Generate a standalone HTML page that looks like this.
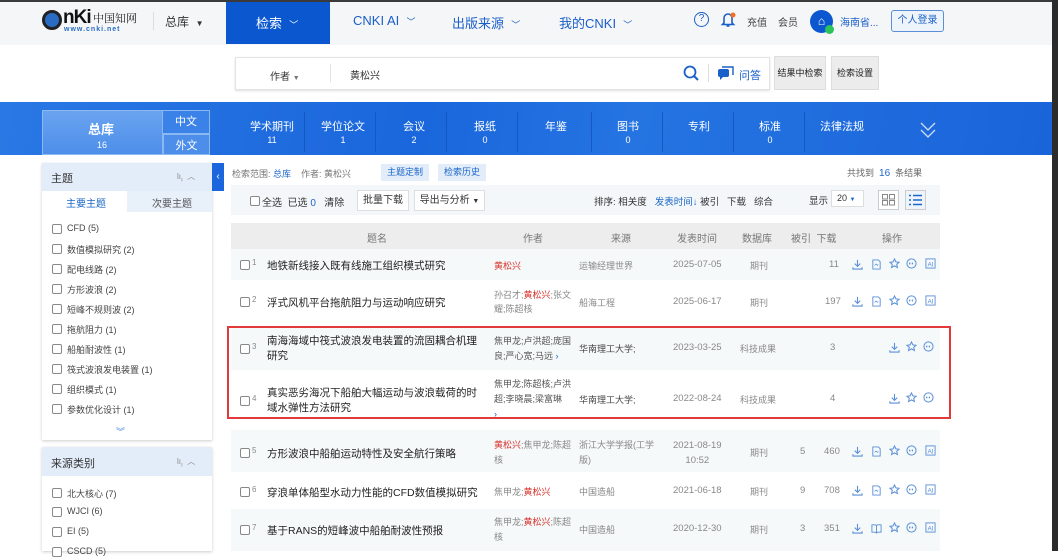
<!DOCTYPE html>
<html><head><meta charset="utf-8">
<style>
*{margin:0;padding:0;box-sizing:border-box}
body{width:1058px;height:551px;overflow:hidden;background:#fff;font-family:"Liberation Sans","Noto Sans CJK SC",sans-serif;font-size:10px;color:#333;position:relative}
.a{position:absolute;white-space:nowrap}
.blue{color:#1b66c9}
.gray{color:#888}
.red{color:#d9332c}
.cb{position:absolute;width:10px;height:10px;border:1px solid #888;border-radius:2px;background:#fff}
.ico{position:absolute;width:11px;height:11px}
</style></head><body>
<!-- top dark line and right strip -->
<div class="a" style="left:0;top:0;width:1058px;height:2px;background:#3a3a3a"></div>
<div class="a" style="left:1052px;top:0;width:6px;height:551px;background:#2b2b2b"></div>
<!-- top bar -->
<div class="a" style="left:0;top:2px;width:1052px;height:43px;background:#f5f6f7"></div>
<div class="a" style="left:42px;top:10px;width:20px;height:20px;border-radius:50%;background:#2a6cc4;border:3px solid #222"></div>
<div class="a" style="left:63px;top:7px;font-size:19px;font-weight:bold;color:#111;letter-spacing:-1px">nKi</div>
<div class="a" style="left:93px;top:10px;font-size:11px;color:#222;font-family:'Noto Serif CJK SC',serif">中国知网</div>
<div class="a" style="left:64px;top:26px;font-size:7px;color:#2a6cc4;font-weight:bold;letter-spacing:1px">www.cnki.net</div>
<div class="a" style="left:153px;top:12px;width:1px;height:18px;background:#ddd"></div>
<div class="a" style="left:165px;top:13px;font-size:12px;color:#333">总库 &nbsp;<span style="font-size:8px">▼</span></div>
<div class="a" style="left:226px;top:2px;width:104px;height:42px;background:#0b57d0"></div>
<div class="a" style="left:256px;top:13px;font-size:13px;color:#fff">检索 &nbsp;<span style="font-size:9px">﹀</span></div>
<div class="a" style="left:353px;top:13px;font-size:13px;color:#1b5fc9">CNKI AI &nbsp;<span style="font-size:9px">﹀</span></div>
<div class="a" style="left:452px;top:13px;font-size:13px;color:#1b5fc9">出版来源 &nbsp;<span style="font-size:9px">﹀</span></div>
<div class="a" style="left:559px;top:13px;font-size:13px;color:#1b5fc9">我的CNKI &nbsp;<span style="font-size:9px">﹀</span></div>
<div class="a" style="left:694px;top:12px;width:15px;height:15px;border:1.5px solid #1b5fc9;border-radius:50%;color:#1b5fc9;font-size:10px;text-align:center;line-height:12px">?</div>
<svg class="a" style="left:720px;top:11px" width="16" height="17" viewBox="0 0 16 17"><path d="M4 12V7a4 4 0 0 1 8 0v5l1.5 1.5h-11z M6.5 15h3" stroke="#1b5fc9" stroke-width="1.6" fill="none"/><circle cx="13" cy="4" r="2.5" fill="#f36f21"/></svg>
<div class="a" style="left:747px;top:14px;font-size:10px;color:#444">充值</div>
<div class="a" style="left:778px;top:14px;font-size:10px;color:#444">会员</div>
<div class="a" style="left:810px;top:10px;width:23px;height:23px;border-radius:50%;background:#0b57d0;color:#fff;font-size:12px;text-align:center;line-height:22px">⌂</div>
<div class="a" style="left:825px;top:25px;width:9px;height:9px;border-radius:50%;background:#2cc45a"></div>
<div class="a" style="left:840px;top:14px;font-size:10px;color:#1b5fc9">海南省...</div>
<div class="a" style="left:891px;top:10px;width:53px;height:22px;border:1px solid #5a8fd8;border-radius:3px;background:#eef4fc;font-size:10px;color:#1b5fc9;text-align:center;line-height:20px">个人登录</div>
<!-- search row -->
<div class="a" style="left:235px;top:57px;width:535px;height:33px;border:1px solid #e3e3e3;box-shadow:0 1px 2px #ddd;background:#fff"></div>
<div class="a" style="left:270px;top:68px;font-size:10px;color:#333">作者 <span style="font-size:7px;color:#777">▼</span></div>
<div class="a" style="left:330px;top:64px;width:1px;height:18px;background:#e3e3e3"></div>
<div class="a" style="left:350px;top:67px;font-size:10px;color:#333">黄松兴</div>
<svg class="a" style="left:683px;top:65px" width="16" height="16" viewBox="0 0 16 16"><circle cx="7" cy="7" r="5.5" stroke="#1b5fc9" stroke-width="1.8" fill="none"/><path d="M11 11l4 4" stroke="#1b5fc9" stroke-width="2"/></svg>
<div class="a" style="left:708px;top:64px;width:1px;height:18px;background:#ddd"></div>
<svg class="a" style="left:717px;top:66px" width="17" height="14" viewBox="0 0 17 14"><rect x="1" y="3" width="11" height="8" rx="2" fill="#1b5fc9"/><path d="M5 1h11v8" stroke="#1b5fc9" stroke-width="1.4" fill="none"/><path d="M3 11l0 3 3-3" fill="#1b5fc9"/></svg>
<div class="a" style="left:739px;top:67px;font-size:11px;color:#1b5fc9">问答</div>
<div class="a" style="left:774px;top:56px;width:52px;height:34px;background:#ececec;border:1px solid #ddd;font-size:9px;color:#222;text-align:center;line-height:32px">结果中检索</div>
<div class="a" style="left:831px;top:56px;width:48px;height:34px;background:#ececec;border:1px solid #ddd;font-size:9px;color:#222;text-align:center;line-height:32px">检索设置</div>
<!-- blue band -->
<div class="a" style="left:0;top:102px;width:1052px;height:53px;background:linear-gradient(100deg,#2a78e4 0%,#1a66dc 40%,#2574e2 60%,#1a64da 100%)"></div>
<div class="a" style="left:42px;top:110px;width:121px;height:45px;background:linear-gradient(180deg,#6aa4f0,#4d8eea);border:1px solid #8bb8f2"></div>
<div class="a" style="left:88px;top:119px;font-size:13px;font-weight:bold;color:#fff">总库</div>
<div class="a" style="left:97px;top:140px;font-size:9px;color:#fff">16</div>
<div class="a" style="left:163px;top:110px;width:47px;height:24px;border:1px solid #8bb8f2;border-left:none;background:#3a82e8;font-size:11px;color:#fff;text-align:center;line-height:22px">中文</div>
<div class="a" style="left:163px;top:134px;width:47px;height:21px;border:1px solid #8bb8f2;background:#4d8eea;font-size:11px;color:#fff;text-align:center;line-height:22px">外文</div>
<div class="a" style="left:240px;top:118px;font-size:11px;color:#fff;width:64px;text-align:center">学术期刊<br><span style="font-size:9px">11</span></div>
<div class="a" style="left:311px;top:118px;font-size:11px;color:#fff;width:64px;text-align:center">学位论文<br><span style="font-size:9px">1</span></div>
<div class="a" style="left:382px;top:118px;font-size:11px;color:#fff;width:64px;text-align:center">会议<br><span style="font-size:9px">2</span></div>
<div class="a" style="left:453px;top:118px;font-size:11px;color:#fff;width:64px;text-align:center">报纸<br><span style="font-size:9px">0</span></div>
<div class="a" style="left:524px;top:118px;font-size:11px;color:#fff;width:64px;text-align:center">年鉴</div>
<div class="a" style="left:596px;top:118px;font-size:11px;color:#fff;width:64px;text-align:center">图书<br><span style="font-size:9px">0</span></div>
<div class="a" style="left:667px;top:118px;font-size:11px;color:#fff;width:64px;text-align:center">专利</div>
<div class="a" style="left:738px;top:118px;font-size:11px;color:#fff;width:64px;text-align:center">标准<br><span style="font-size:9px">0</span></div>
<div class="a" style="left:810px;top:118px;font-size:11px;color:#fff;width:64px;text-align:center">法律法规</div>
<div class="a" style="left:304px;top:112px;width:1px;height:40px;background:#1558c4"></div>
<div class="a" style="left:375px;top:112px;width:1px;height:40px;background:#1558c4"></div>
<div class="a" style="left:446px;top:112px;width:1px;height:40px;background:#1558c4"></div>
<div class="a" style="left:517px;top:112px;width:1px;height:40px;background:#1558c4"></div>
<div class="a" style="left:591px;top:112px;width:1px;height:40px;background:#1558c4"></div>
<div class="a" style="left:662px;top:112px;width:1px;height:40px;background:#1558c4"></div>
<div class="a" style="left:733px;top:112px;width:1px;height:40px;background:#1558c4"></div>
<div class="a" style="left:804px;top:112px;width:1px;height:40px;background:#1558c4"></div>
<svg class="a" style="left:919px;top:120px" width="18" height="20" viewBox="0 0 18 20"><path d="M2 3l7 7 7-7M2 10l7 7 7-7" stroke="#cfe0fa" stroke-width="1.3" fill="none"/></svg>
<!-- left panel -->
<div class="a" style="left:42px;top:163px;width:170px;height:277px;background:#fff;box-shadow:0 1px 3px #ccc"></div>
<div class="a" style="left:42px;top:163px;width:170px;height:28px;background:#e3edf9"></div>
<div class="a" style="left:51px;top:170px;font-size:11px;color:#333">主题</div>
<div class="a" style="left:177px;top:171px;font-size:8px;color:#888">lı<sub>ı</sub> &nbsp;︿</div>
<div class="a" style="left:127px;top:191px;width:85px;height:21px;background:#e8f0fa"></div>
<div class="a" style="left:66px;top:195px;font-size:10px;color:#1b66c9">主要主题</div>
<div class="a" style="left:152px;top:195px;font-size:10px;color:#555">次要主题</div>
<div class="a" style="left:212px;top:163px;width:12px;height:28px;background:#1b66dc;color:#fff;font-size:10px;text-align:center;line-height:27px">‹</div>
<div id="l1"></div>
<div class="a" style="left:116px;top:425px;font-size:9px;color:#4a8ae0">︾</div>
<div class="a" style="left:42px;top:447px;width:170px;height:104px;background:#fff;box-shadow:0 1px 3px #ccc"></div>
<div class="a" style="left:42px;top:447px;width:170px;height:29px;background:#e3edf9"></div>
<div class="a" style="left:51px;top:455px;font-size:11px;color:#333">来源类别</div>
<div class="a" style="left:177px;top:456px;font-size:8px;color:#888">lı<sub>ı</sub> &nbsp;︿</div>
<!-- list items -->
<div class="cb" style="left:52px;top:224px"></div><div class="a" style="left:67px;top:223px;color:#444;font-size:9px">CFD (5)</div>
<div class="cb" style="left:52px;top:244px"></div><div class="a" style="left:67px;top:243px;color:#444;font-size:9px">数值模拟研究 (2)</div>
<div class="cb" style="left:52px;top:264px"></div><div class="a" style="left:67px;top:263px;color:#444;font-size:9px">配电线路 (2)</div>
<div class="cb" style="left:52px;top:284px"></div><div class="a" style="left:67px;top:283px;color:#444;font-size:9px">方形波浪 (2)</div>
<div class="cb" style="left:52px;top:304px"></div><div class="a" style="left:67px;top:303px;color:#444;font-size:9px">短峰不规则波 (2)</div>
<div class="cb" style="left:52px;top:324px"></div><div class="a" style="left:67px;top:323px;color:#444;font-size:9px">拖航阻力 (1)</div>
<div class="cb" style="left:52px;top:344px"></div><div class="a" style="left:67px;top:343px;color:#444;font-size:9px">船舶耐波性 (1)</div>
<div class="cb" style="left:52px;top:364px"></div><div class="a" style="left:67px;top:363px;color:#444;font-size:9px">筏式波浪发电装置 (1)</div>
<div class="cb" style="left:52px;top:384px"></div><div class="a" style="left:67px;top:383px;color:#444;font-size:9px">组织模式 (1)</div>
<div class="cb" style="left:52px;top:404px"></div><div class="a" style="left:67px;top:403px;color:#444;font-size:9px">参数优化设计 (1)</div>
<div class="cb" style="left:52px;top:488px"></div><div class="a" style="left:67px;top:487px;color:#444;font-size:9px">北大核心 (7)</div>
<div class="cb" style="left:52px;top:507px"></div><div class="a" style="left:67px;top:506px;color:#444;font-size:9px">WJCI (6)</div>
<div class="cb" style="left:52px;top:527px"></div><div class="a" style="left:67px;top:526px;color:#444;font-size:9px">EI (5)</div>
<div class="cb" style="left:52px;top:547px"></div><div class="a" style="left:67px;top:546px;color:#444;font-size:9px">CSCD (5)</div>
<!-- result head -->
<div class="a" style="left:232px;top:167px;font-size:9px;color:#777">检索范围: <b class="blue" style="font-weight:normal">总库</b> &nbsp;&nbsp; 作者: 黄松兴</div>
<div class="a" style="left:381px;top:164px;width:48px;height:17px;background:#e3edf9;color:#1b66c9;font-size:9px;text-align:center;line-height:17px">主题定制</div>
<div class="a" style="left:438px;top:164px;width:48px;height:17px;background:#e3edf9;color:#1b66c9;font-size:9px;text-align:center;line-height:17px">检索历史</div>
<div class="a" style="left:847px;top:166px;font-size:9px;color:#666">共找到 &nbsp;<span class="blue" style="font-size:10px">16</span>&nbsp; 条结果</div>
<div class="a" style="left:231px;top:185px;width:709px;height:30px;background:#f4f7f9"></div>
<div class="cb" style="left:250px;top:196px"></div>
<div class="a" style="left:262px;top:194px;font-size:10px;color:#333">全选 &nbsp;已选 <span class="blue">0</span> &nbsp; 清除</div>
<div class="a" style="left:357px;top:190px;width:52px;height:21px;background:#fff;border:1px solid #ddd;font-size:10px;text-align:center;line-height:19px">批量下载</div>
<div class="a" style="left:414px;top:190px;width:71px;height:21px;background:#fff;border:1px solid #ddd;font-size:10px;text-align:center;line-height:19px">导出与分析 <span style="font-size:7px">▼</span></div>
<div class="a" style="left:594px;top:194px;font-size:9.5px;color:#333">排序: 相关度 &nbsp;&nbsp;<span class="blue">发表时间↓</span> 被引 &nbsp;&nbsp;下载 &nbsp;&nbsp;综合</div>
<div class="a" style="left:809px;top:193px;font-size:9.5px;color:#333">显示</div>
<div class="a" style="left:831px;top:190px;width:33px;height:17px;background:#fff;border:1px solid #ddd;font-size:9px;line-height:15px;padding-left:5px">20 <span style="font-size:6px;color:#1b66c9">▼</span></div>
<div class="a" style="left:878px;top:190px;width:21px;height:20px;border:1px solid #ccc;background:#fff"></div>
<svg class="a" style="left:882px;top:194px" width="13" height="12"><rect x="0.5" y="0.5" width="5" height="4.5" fill="none" stroke="#888"/><rect x="7.5" y="0.5" width="5" height="4.5" fill="none" stroke="#888"/><rect x="0.5" y="6.5" width="5" height="4.5" fill="none" stroke="#888"/><rect x="7.5" y="6.5" width="5" height="4.5" fill="none" stroke="#888"/></svg>
<div class="a" style="left:905px;top:190px;width:21px;height:20px;border:1px solid #ccc;background:#eef4fc"></div>
<svg class="a" style="left:909px;top:194px" width="13" height="12"><path d="M0 1.5h2M4 1.5h9M0 6h2M4 6h9M0 10.5h2M4 10.5h9" stroke="#1b66c9" stroke-width="1.5"/></svg>
<!-- table header -->
<div class="a" style="left:231px;top:223px;width:709px;height:26px;background:#ededed"></div>
<div class="a" style="left:367px;top:230px;font-size:10px;color:#777">题名</div>
<div class="a" style="left:523px;top:230px;font-size:10px;color:#777">作者</div>
<div class="a" style="left:611px;top:230px;font-size:10px;color:#777">来源</div>
<div class="a" style="left:677px;top:230px;font-size:10px;color:#777">发表时间</div>
<div class="a" style="left:742px;top:230px;font-size:10px;color:#777">数据库</div>
<div class="a" style="left:791px;top:230px;font-size:10px;color:#777">被引 &nbsp;下载</div>
<div class="a" style="left:882px;top:230px;font-size:10px;color:#777">操作</div>
<!-- rows bg -->
<div class="a" style="left:231px;top:249px;width:709px;height:31px;background:#f5f9fa"></div>
<div class="a" style="left:231px;top:327px;width:709px;height:43px;background:#f5f9fa"></div>
<div class="a" style="left:231px;top:430px;width:709px;height:42px;background:#f5f9fa"></div>
<div class="a" style="left:231px;top:509px;width:709px;height:42px;background:#f5f9fa"></div>
<div class="a" style="left:227px;top:326px;width:724px;height:93px;border:2px solid #e23a3a"></div>
<!-- row 1 -->
<div class="cb" style="left:240px;top:260px"></div><div class="a gray" style="left:252px;top:258px;font-size:8px">1</div>
<div class="a" style="left:267px;top:258px;font-size:10.5px;color:#222">地铁新线接入既有线施工组织模式研究</div>
<div class="a red" style="left:494px;top:259px;font-size:9px">黄松兴</div>
<div class="a gray" style="left:579px;top:259px;font-size:9px">运输经理世界</div>
<div class="a gray" style="left:673px;top:259px;font-size:9.5px">2025-07-05</div>
<div class="a gray" style="left:750px;top:259px;font-size:9px">期刊</div>
<div class="a gray" style="left:829px;top:259px;font-size:9.5px">11</div>
<!-- row 2 -->
<div class="cb" style="left:240px;top:297px"></div><div class="a gray" style="left:252px;top:295px;font-size:8px">2</div>
<div class="a" style="left:267px;top:295px;font-size:10.5px;color:#222">浮式风机平台拖航阻力与运动响应研究</div>
<div class="a gray" style="left:494px;top:288px;font-size:9px;line-height:14px">孙召才;<span class="red">黄松兴</span>;张文<br>耀;陈超核</div>
<div class="a gray" style="left:579px;top:296px;font-size:9px">船海工程</div>
<div class="a gray" style="left:673px;top:296px;font-size:9.5px">2025-06-17</div>
<div class="a gray" style="left:750px;top:296px;font-size:9px">期刊</div>
<div class="a gray" style="left:825px;top:296px;font-size:9.5px">197</div>
<!-- row 3 -->
<div class="cb" style="left:240px;top:344px"></div><div class="a gray" style="left:252px;top:342px;font-size:8px">3</div>
<div class="a" style="left:267px;top:334px;font-size:10.5px;color:#222;line-height:15px">南海海域中筏式波浪发电装置的流固耦合机理<br>研究</div>
<div class="a" style="left:494px;top:334px;font-size:9px;color:#555;line-height:15px">焦甲龙;卢洪超;庞国<br>良;严心宽;马远 <span class="blue">›</span></div>
<div class="a" style="left:579px;top:342px;font-size:9px;color:#444">华南理工大学;</div>
<div class="a gray" style="left:673px;top:342px;font-size:9.5px">2023-03-25</div>
<div class="a gray" style="left:740px;top:342px;font-size:9px">科技成果</div>
<div class="a gray" style="left:830px;top:342px;font-size:9.5px">3</div>
<!-- row 4 -->
<div class="cb" style="left:240px;top:396px"></div><div class="a gray" style="left:252px;top:394px;font-size:8px">4</div>
<div class="a" style="left:267px;top:386px;font-size:10.5px;color:#222;line-height:15px">真实恶劣海况下船舶大幅运动与波浪载荷的时<br>域水弹性方法研究</div>
<div class="a" style="left:494px;top:377px;font-size:9px;color:#555;line-height:15px">焦甲龙;陈超核;卢洪<br>超;李晓晨;梁富琳<br><span class="blue">›</span></div>
<div class="a" style="left:579px;top:393px;font-size:9px;color:#444">华南理工大学;</div>
<div class="a gray" style="left:673px;top:393px;font-size:9.5px">2022-08-24</div>
<div class="a gray" style="left:740px;top:393px;font-size:9px">科技成果</div>
<div class="a gray" style="left:830px;top:393px;font-size:9.5px">4</div>
<!-- row 5 -->
<div class="cb" style="left:240px;top:448px"></div><div class="a gray" style="left:252px;top:446px;font-size:8px">5</div>
<div class="a" style="left:267px;top:446px;font-size:10.5px;color:#222">方形波浪中船舶运动特性及安全航行策略</div>
<div class="a gray" style="left:494px;top:438px;font-size:9px;line-height:15px"><span class="red">黄松兴</span>;焦甲龙;陈超<br>核</div>
<div class="a gray" style="left:579px;top:438px;font-size:9px;line-height:15px">浙江大学学报(工学<br>版)</div>
<div class="a gray" style="left:673px;top:438px;font-size:9.5px;line-height:15px;text-align:center">2021-08-19<br>10:52</div>
<div class="a gray" style="left:750px;top:446px;font-size:9px">期刊</div>
<div class="a gray" style="left:800px;top:446px;font-size:9.5px">5</div>
<div class="a gray" style="left:824px;top:446px;font-size:9.5px">460</div>
<!-- row 6 -->
<div class="cb" style="left:240px;top:487px"></div><div class="a gray" style="left:252px;top:485px;font-size:8px">6</div>
<div class="a" style="left:267px;top:485px;font-size:10.5px;color:#222">穿浪单体船型水动力性能的CFD数值模拟研究</div>
<div class="a gray" style="left:494px;top:485px;font-size:9px">焦甲龙;<span class="red">黄松兴</span></div>
<div class="a gray" style="left:579px;top:485px;font-size:9px">中国造船</div>
<div class="a gray" style="left:673px;top:485px;font-size:9.5px">2021-06-18</div>
<div class="a gray" style="left:750px;top:485px;font-size:9px">期刊</div>
<div class="a gray" style="left:800px;top:485px;font-size:9.5px">9</div>
<div class="a gray" style="left:824px;top:485px;font-size:9.5px">708</div>
<!-- row 7 -->
<div class="cb" style="left:240px;top:525px"></div><div class="a gray" style="left:252px;top:523px;font-size:8px">7</div>
<div class="a" style="left:267px;top:523px;font-size:10.5px;color:#222">基于RANS的短峰波中船舶耐波性预报</div>
<div class="a gray" style="left:494px;top:515px;font-size:9px;line-height:15px">焦甲龙;<span class="red">黄松兴</span>;陈超<br>核</div>
<div class="a gray" style="left:579px;top:523px;font-size:9px">中国造船</div>
<div class="a gray" style="left:673px;top:523px;font-size:9.5px">2020-12-30</div>
<div class="a gray" style="left:750px;top:523px;font-size:9px">期刊</div>
<div class="a gray" style="left:800px;top:523px;font-size:9.5px">3</div>
<div class="a gray" style="left:824px;top:523px;font-size:9.5px">351</div>
<!-- op icons -->
<svg width="0" height="0" style="position:absolute"><defs>
<symbol id="dl" viewBox="0 0 12 12"><path d="M6 1v7M3 5l3 3 3-3M1 9v2h10V9" stroke="#5b8fd6" stroke-width="1.2" fill="none"/></symbol>
<symbol id="doc" viewBox="0 0 12 12"><path d="M2 1h6l2 2v8H2z" stroke="#5b8fd6" stroke-width="1" fill="none"/><path d="M4 7l1.5-1.5L7 7l1-1" stroke="#5b8fd6" stroke-width=".8" fill="none"/></symbol>
<symbol id="star" viewBox="0 0 12 12"><path d="M6 1l1.5 3.2 3.5.4-2.6 2.3.8 3.5L6 8.6 2.8 10.4l.8-3.5L1 4.6l3.5-.4z" stroke="#5b8fd6" stroke-width="1.1" fill="none"/></symbol>
<symbol id="q" viewBox="0 0 12 12"><circle cx="6" cy="6" r="5" stroke="#5b8fd6" stroke-width="1.1" fill="none"/><path d="M4 5v2M7 5v2" stroke="#5b8fd6" stroke-width="1.4"/></symbol>
<symbol id="ai" viewBox="0 0 12 12"><rect x="1" y="1" width="10" height="10" stroke="#5b8fd6" stroke-width="1" fill="none"/><text x="6" y="9" font-size="7" text-anchor="middle" fill="#5b8fd6" font-family="Liberation Sans">AI</text></symbol>
<symbol id="bk" viewBox="0 0 12 12"><path d="M1 2h4l1 1 1-1h4v8H7l-1 1-1-1H1zM6 3v8" stroke="#5b8fd6" stroke-width="1" fill="none"/></symbol>
</defs></svg>
<svg class="ico" style="left:852px;top:259px"><use href="#dl"/></svg><svg class="ico" style="left:871px;top:259px"><use href="#doc"/></svg><svg class="ico" style="left:889px;top:258px"><use href="#star"/></svg><svg class="ico" style="left:906px;top:258px"><use href="#q"/></svg><svg class="ico" style="left:925px;top:258px"><use href="#ai"/></svg>
<svg class="ico" style="left:852px;top:296px"><use href="#dl"/></svg><svg class="ico" style="left:871px;top:296px"><use href="#doc"/></svg><svg class="ico" style="left:889px;top:295px"><use href="#star"/></svg><svg class="ico" style="left:906px;top:295px"><use href="#q"/></svg><svg class="ico" style="left:925px;top:295px"><use href="#ai"/></svg>
<svg class="ico" style="left:889px;top:342px"><use href="#dl"/></svg><svg class="ico" style="left:906px;top:341px"><use href="#star"/></svg><svg class="ico" style="left:923px;top:341px"><use href="#q"/></svg>
<svg class="ico" style="left:889px;top:393px"><use href="#dl"/></svg><svg class="ico" style="left:906px;top:392px"><use href="#star"/></svg><svg class="ico" style="left:923px;top:392px"><use href="#q"/></svg>
<svg class="ico" style="left:852px;top:446px"><use href="#dl"/></svg><svg class="ico" style="left:871px;top:446px"><use href="#doc"/></svg><svg class="ico" style="left:889px;top:445px"><use href="#star"/></svg><svg class="ico" style="left:906px;top:445px"><use href="#q"/></svg><svg class="ico" style="left:925px;top:445px"><use href="#ai"/></svg>
<svg class="ico" style="left:852px;top:485px"><use href="#dl"/></svg><svg class="ico" style="left:871px;top:485px"><use href="#doc"/></svg><svg class="ico" style="left:889px;top:484px"><use href="#star"/></svg><svg class="ico" style="left:906px;top:484px"><use href="#q"/></svg><svg class="ico" style="left:925px;top:484px"><use href="#ai"/></svg>
<svg class="ico" style="left:852px;top:523px"><use href="#dl"/></svg><svg class="ico" style="left:871px;top:523px"><use href="#bk"/></svg><svg class="ico" style="left:889px;top:522px"><use href="#star"/></svg><svg class="ico" style="left:906px;top:522px"><use href="#q"/></svg><svg class="ico" style="left:925px;top:522px"><use href="#ai"/></svg>
</body></html>
